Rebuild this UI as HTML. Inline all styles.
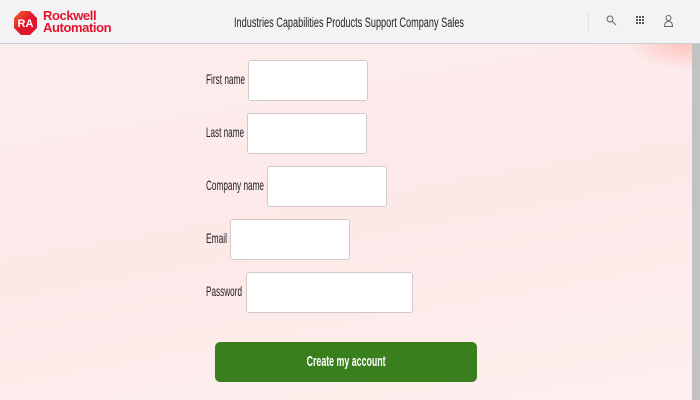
<!DOCTYPE html>
<html><head><meta charset="utf-8"><style>
*{margin:0;padding:0;box-sizing:border-box}
body{width:700px;height:400px;overflow:hidden;position:relative;font-family:"Liberation Sans",sans-serif;background:#fdeeee}
.bg{position:absolute;left:0;top:44px;width:692px;height:356px;background:
radial-gradient(ellipse 60px 25px at 685px 0px,rgba(255,185,180,.8),transparent),
linear-gradient(170deg,#fdeeee 0%,#fde8e8 50%,#fdf0ee 100%)}
.sb{position:absolute;left:692px;top:44px;width:8px;height:356px;background:#c2c2c2}
header{position:absolute;left:0;top:0;width:700px;height:44px;background:#f3f3f5;border-bottom:1px solid #cfcfcf}
.logo{position:absolute;left:14px;top:11px}
.brand{position:absolute;left:43px;top:10px;color:#e3142d;font-weight:bold;font-size:13px;line-height:12px;letter-spacing:-.4px}
.nav{position:absolute;left:234px;top:15px;font-size:13.5px;color:#222;white-space:nowrap;font-family:"Liberation Sans Narrow","Liberation Sans",sans-serif}
.nav span{display:inline-block;transform-origin:left}
.div{position:absolute;left:588px;top:12px;width:1px;height:20px;background:#e2e2e2}
.lbl{position:absolute;font-size:14px;color:#222;font-family:"Liberation Sans Narrow","Liberation Sans",sans-serif;white-space:nowrap}
.in{position:absolute;width:120px;height:41px;background:#fff;border:1px solid #d2caca;border-radius:3px}
.btn{position:absolute;left:215px;top:342px;width:262px;height:40px;background:#3a7f1d;border-radius:5px;color:#fff;font-size:15px;font-weight:bold;text-align:center;line-height:40px;font-family:"Liberation Sans Narrow","Liberation Sans",sans-serif}
</style></head><body>
<div class="bg"></div><div class="sb"></div>
<header>
<svg class="logo" width="23" height="24" viewBox="0 0 23 24"><defs><linearGradient id="g" x1="0" y1="0" x2="1" y2="1"><stop offset="0" stop-color="#f26a21"/><stop offset=".5" stop-color="#e3142d"/></linearGradient></defs><polygon points="7,0 16,0 23,7 23,17 16,24 7,24 0,17 0,7" fill="url(#g)"/><text x="11.5" y="16" text-anchor="middle" font-family="Liberation Sans" font-weight="bold" font-size="11" fill="#fff">RA</text></svg>
<div class="brand"><span id="b1" style="display:inline-block;transform-origin:left">Rockwell</span><br><span id="b2" style="display:inline-block;transform-origin:left">Automation</span></div>
<div class="nav"><span>Industries Capabilities Products Support Company Sales</span></div>
<div class="div"></div>
<svg style="position:absolute;left:606px;top:15px" width="11" height="11" viewBox="0 0 11 11"><circle cx="4" cy="4" r="3" fill="none" stroke="#666" stroke-width="1"/><line x1="6.3" y1="6.3" x2="10" y2="10" stroke="#666"/></svg>
<svg style="position:absolute;left:636px;top:16px" width="8" height="8" viewBox="0 0 8 8" fill="#555"><rect x="0" y="0" width="2" height="2"/><rect x="3" y="0" width="2" height="2"/><rect x="6" y="0" width="2" height="2"/><rect x="0" y="3" width="2" height="2"/><rect x="3" y="3" width="2" height="2"/><rect x="6" y="3" width="2" height="2"/><rect x="0" y="6" width="2" height="2"/><rect x="3" y="6" width="2" height="2"/><rect x="6" y="6" width="2" height="2"/></svg>
<svg style="position:absolute;left:664px;top:15px" width="9" height="12" viewBox="0 0 9 12"><circle cx="4.5" cy="3" r="2.5" fill="none" stroke="#666"/><path d="M0.5 11.5 Q0.5 6.5 4.5 6.5 Q8.5 6.5 8.5 11.5 Z" fill="none" stroke="#666"/></svg>
</header>
<div class="lbl" style="left:206px;top:71px">First name</div><div class="in" style="left:248px;top:60px"></div>
<div class="lbl" style="left:206px;top:124px">Last name</div><div class="in" style="left:247px;top:113px"></div>
<div class="lbl" style="left:206px;top:177px">Company name</div><div class="in" style="left:267px;top:166px"></div>
<div class="lbl" style="left:206px;top:230px">Email</div><div class="in" style="left:230px;top:219px"></div>
<div class="lbl" style="left:206px;top:283px">Password</div><div class="in" style="left:246px;top:272px;width:167px"></div>
<div class="btn"><span id="bt" style="display:inline-block">Create my account</span></div>
<script>
(function(){function fit(e,tw){var ww=e.getBoundingClientRect().width;if(Math.abs(ww-tw)>2){e.style.transformOrigin='left';e.style.transform='scaleX('+(tw/ww)+')';}}
fit(document.querySelector('.nav span'),230);
fit(document.getElementById('b1'),52);fit(document.getElementById('b2'),67);
var t={'First name':39,'Last name':38,'Company name':58,'Email':21,'Password':36};
document.querySelectorAll('.lbl').forEach(function(e){fit(e,t[e.textContent]);});
var b=document.getElementById('bt');var w=b.getBoundingClientRect().width;b.style.transform='scaleX('+(79/w)+')';})();
</script>
</body></html>
